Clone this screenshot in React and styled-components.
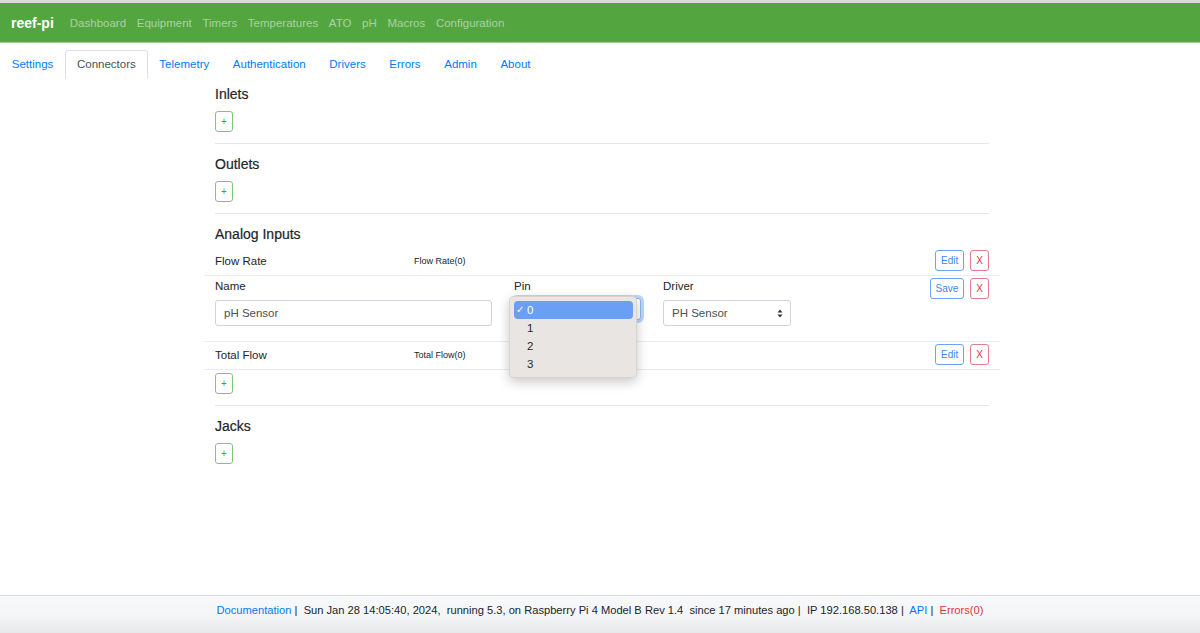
import React from "react";
import styled, { createGlobalStyle } from "styled-components";

const GlobalStyle = createGlobalStyle`
  html, body { margin: 0; padding: 0; background: #fff; }
  body {
    font-family: "Liberation Sans", Arial, sans-serif;
    font-size: 11.5px;
    color: #212529;
  }
  * { box-sizing: border-box; }
`;

const Page = styled.div`
  display: flex;
  flex-direction: column;
  min-height: 633px;
`;

const NavBar = styled.header`
  display: flex;
  align-items: center;
  height: 43px;
  border-top: 3px solid #dadada;
  border-bottom: 1px solid #9fd095;
  background: #53a53f;
  padding-left: 11px;
`;

const Brand = styled.span`
  color: #fff;
  font-size: 14px;
  font-weight: 700;
  margin-right: 16px;
`;

const NavLinks = styled.nav`
  display: flex;
  gap: 10.7px;
`;

const NavLink = styled.span`
  color: rgba(255, 255, 255, 0.5);
  line-height: 14px;
`;

const Tabs = styled.ul`
  display: flex;
  width: fit-content;
  list-style: none;
  margin: 7px 0 0;
  padding: 0;
  border-bottom: 1px solid #dee2e6;
`;

const Tab = styled.li`
  padding: 6px 10.8px 7px;
  line-height: 14px;
  margin-bottom: -1px;
  border: 1px solid ${(p) => (p.$active ? "#dee2e6" : "transparent")};
  border-bottom-color: ${(p) => (p.$active ? "#fff" : "transparent")};
  border-radius: 3px 3px 0 0;
  background: #fff;
  color: ${(p) => (p.$active ? "#495057" : "#007bff")};
`;

const Container = styled.main`
  width: 796px;
  margin-left: calc(50% - 396px);
  padding: 0 11px;
`;

const Section = styled.section`
  padding: 12px 0 11px;
  border-bottom: 1px solid #e6e7e8;
  &:first-child { padding-top: 7px; }
  &:last-child { border-bottom: none; }
`;

const Heading = styled.h4`
  margin: 0 0 ${(p) => (p.$tight ? 5 : 8)}px;
  font-size: 14px;
  line-height: 17px;
  font-weight: 400;
  -webkit-text-stroke: 0.2px currentColor;
  color: #212529;
`;

const SmallButton = styled.button`
  height: 21px;
  padding: 0 5px;
  font-family: inherit;
  font-size: 10px;
  line-height: 19px;
  background: #fff;
  border-radius: 3px;
  border: 1px solid ${(p) => p.$border};
  color: ${(p) => p.$color};
  cursor: pointer;
`;

const AddButton = styled(SmallButton).attrs({ $border: "#7cc77a", $color: "#3aa845" })`
  margin-top: ${(p) => (p.$gap ? 3 : 0)}px;
  display: block;
`;

const Row = styled.div`
  display: flex;
  align-items: ${(p) => (p.$top ? "flex-start" : "center")};
  margin: 0 -11px;
  padding: ${(p) => (p.$top ? "2px 0 15px" : "2px 0 4px")};
  border-bottom: 1px solid #e9ebed;
`;

const NameCol = styled.div`
  width: 199px;
  padding: 0 11px;
  line-height: 14px;
`;

const ValueCol = styled.div`
  flex: 1;
  padding: 0 11px;
  font-size: 9px;
  line-height: 12px;
`;

const Actions = styled.div`
  display: flex;
  gap: 6px;
  padding: 0 11px;
  margin-left: auto;
`;

const Field = styled.div`
  width: ${(p) => p.$w}px;
  padding: 1px 11px 0;
`;

const Label = styled.div`
  line-height: 14px;
  margin-bottom: ${(p) => (p.$mb ?? 7)}px;
`;

const TextInput = styled.div`
  height: 26px;
  border: 1px solid #ced4da;
  border-radius: 3px;
  padding: 0 8px;
  display: flex;
  align-items: center;
  color: #495057;
`;

const SelectWrap = styled.div`
  position: relative;
`;

const FocusedSelect = styled.div`
  width: 127px;
  height: 22px;
  margin-top: -1px;
  border: 1px solid #8ab8f8;
  border-radius: 3px;
  box-shadow: 0 0 0 3px rgba(110, 165, 245, 0.45);
  background: #fff;
`;

const SelectBox = styled(TextInput)`
  width: 128px;
  justify-content: space-between;
  padding-right: 7px;
  color: #495057;
`;

const Dropdown = styled.ul`
  position: absolute;
  left: -5px;
  top: -2px;
  width: 128px;
  margin: 0;
  padding: 4px 3px 4px 4px;
  list-style: none;
  background: #e9e5e2;
  border: 1px solid rgba(0, 0, 0, 0.08);
  border-radius: 5px;
  box-shadow: 0 4px 12px rgba(0, 0, 0, 0.22);
  z-index: 5;
`;

const Option = styled.li`
  position: relative;
  height: 18px;
  line-height: 18px;
  padding-left: 13px;
  border-radius: 4px;
  color: ${(p) => (p.$selected ? "#fff" : "#2a2a2a")};
  background: ${(p) => (p.$selected ? "#6a9ff5" : "transparent")};
`;

const Check = styled.span`
  position: absolute;
  left: 2px;
  top: 0;
  font-size: 10px;
`;

const Footer = styled.footer`
  margin-top: auto;
  height: 38px;
  padding-top: 7px;
  border-top: 1px solid #dcdcdc;
  background: linear-gradient(to bottom, #f8f9fa 0%, #f4f5f6 55%, #e6e7e8 100%);
  text-align: center;
  font-size: 11.15px;
  line-height: 14px;
  white-space: pre;
`;

const FooterLink = styled.span`
  color: ${(p) => (p.$danger ? "#dc3545" : "#007bff")};
`;

const ArrowIcon = () => (
  <svg width="6" height="9" viewBox="0 0 6 9">
    <path d="M3 0.5 L5.5 3.5 H0.5 Z" fill="#333" />
    <path d="M3 8.5 L5.5 5.5 H0.5 Z" fill="#333" />
  </svg>
);

const navItems = ["Dashboard", "Equipment", "Timers", "Temperatures", "ATO", "pH", "Macros", "Configuration"];
const tabs = ["Settings", "Connectors", "Telemetry", "Authentication", "Drivers", "Errors", "Admin", "About"];

const EditButtons = ({ primary = "Edit" }) => (
  <Actions>
    <SmallButton $border="#6aa3f7" $color="#3b86f5">{primary}</SmallButton>
    <SmallButton $border="#e47c85" $color="#dc3545">X</SmallButton>
  </Actions>
);

export default function App() {
  return (
    <>
      <GlobalStyle />
      <Page>
        <NavBar>
          <Brand>reef-pi</Brand>
          <NavLinks>
            {navItems.map((n) => (
              <NavLink key={n}>{n}</NavLink>
            ))}
          </NavLinks>
        </NavBar>
        <Tabs>
          {tabs.map((t) => (
            <Tab key={t} $active={t === "Connectors"}>{t}</Tab>
          ))}
        </Tabs>
        <Container>
          <Section>
            <Heading>Inlets</Heading>
            <AddButton>+</AddButton>
          </Section>
          <Section>
            <Heading>Outlets</Heading>
            <AddButton>+</AddButton>
          </Section>
          <Section>
            <Heading $tight>Analog Inputs</Heading>
            <Row>
              <NameCol>Flow Rate</NameCol>
              <ValueCol>Flow Rate(0)</ValueCol>
              <EditButtons />
            </Row>
            <Row $top>
              <Field $w={299}>
                <Label>Name</Label>
                <TextInput>pH Sensor</TextInput>
              </Field>
              <Field $w={149}>
                <Label $mb={6}>Pin</Label>
                <SelectWrap>
                  <FocusedSelect />
                  <Dropdown>
                    <Option $selected>
                      <Check>✓</Check>0
                    </Option>
                    <Option>1</Option>
                    <Option>2</Option>
                    <Option>3</Option>
                  </Dropdown>
                </SelectWrap>
              </Field>
              <Field $w={149}>
                <Label>Driver</Label>
                <SelectBox>
                  PH Sensor
                  <ArrowIcon />
                </SelectBox>
              </Field>
              <EditButtons primary="Save" />
            </Row>
            <Row>
              <NameCol>Total Flow</NameCol>
              <ValueCol>Total Flow(0)</ValueCol>
              <EditButtons />
            </Row>
            <AddButton $gap>+</AddButton>
          </Section>
          <Section>
            <Heading>Jacks</Heading>
            <AddButton>+</AddButton>
          </Section>
        </Container>
        <Footer>
          <FooterLink>Documentation</FooterLink>
          {" |  Sun Jan 28 14:05:40, 2024,  running 5.3, on Raspberry Pi 4 Model B Rev 1.4  since 17 minutes ago |  IP 192.168.50.138 |  "}
          <FooterLink>API</FooterLink>
          {" |  "}
          <FooterLink $danger>Errors(0)</FooterLink>
        </Footer>
      </Page>
    </>
  );
}
